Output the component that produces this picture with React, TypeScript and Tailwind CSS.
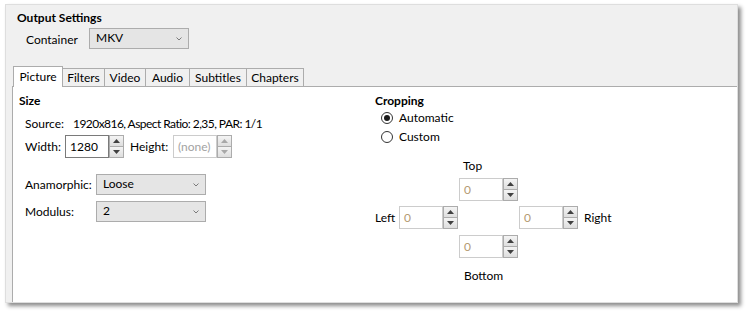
import React from 'react';

const font = { fontFamily: 'Lato, "Noto Sans", sans-serif' };

function Chevron() {
  return (
    <svg width="6" height="4" viewBox="0 0 6 4" className="shrink-0">
      <polyline points="0.5,0.5 3,3 5.5,0.5" fill="none" stroke="#7a7a7a" strokeWidth="1" />
    </svg>
  );
}

function Select({ value, width }: { value: string; width: string }) {
  return (
    <div className={`${width} h-[21px] flex items-center justify-between pl-[6px] pr-[6px] bg-[#e5e5e5] border border-[#acacac] text-[12px] text-black`}>
      <span className="-mt-[2px]">{value}</span>
      <Chevron />
    </div>
  );
}

function Arrow({ up, disabled }: { up?: boolean; disabled?: boolean }) {
  return (
    <div className="flex-1 flex items-center justify-center border border-[#acacac] bg-gradient-to-b from-[#f4f4f4] to-[#dedede]">
      <svg width="7" height="4" viewBox="0 0 7 4">
        <polygon
          points={up ? '0,4 3.5,0 7,4' : '0,0 3.5,4 7,0'}
          fill={disabled ? '#a8a8a8' : '#404040'}
        />
      </svg>
    </div>
  );
}

function Spin({ value, tone }: { value: string; tone: 'normal' | 'none' | 'zero' }) {
  const box =
    tone === 'normal'
      ? 'border-[#7a7a7a] text-black'
      : tone === 'none'
        ? 'border-[#cccccc] text-[#a3a3a3]'
        : 'border-[#cccccc] text-[#b49a72]';
  return (
    <div className="flex h-[23px]">
      <div className={`w-[44px] h-full border bg-white pl-[4px] flex items-center text-[12px] ${box}`}>
        <span className="mt-[1px]">{value}</span>
      </div>
      <div className="w-[15px] h-full flex flex-col -space-y-px">
        <Arrow up disabled={tone === 'none'} />
        <Arrow disabled={tone === 'none'} />
      </div>
    </div>
  );
}

function Radio({ checked, label }: { checked?: boolean; label: string }) {
  return (
    <div className="flex items-center h-[18px] leading-[18px] pl-[6px]">
      <svg width="12" height="12" viewBox="0 0 12 12" className="shrink-0">
        <circle cx="6" cy="6" r="5.5" fill="white" stroke="#333333" />
        {checked && <circle cx="6" cy="6" r="3" fill="#1a1a1a" />}
      </svg>
      <span className="ml-[6px]">{label}</span>
    </div>
  );
}

const tabs = [
  { name: 'Picture', w: 'w-[50px]' },
  { name: 'Filters', w: 'w-[43px]' },
  { name: 'Video', w: 'w-[42px]' },
  { name: 'Audio', w: 'w-[45px]' },
  { name: 'Subtitles', w: 'w-[58px]' },
  { name: 'Chapters', w: 'w-[58px]' },
];

export default function App() {
  return (
    <div className="w-[747px] h-[313px] bg-white overflow-hidden pt-[4px] pl-[5px] text-[12px] text-black" style={font}>
      <div className="w-[733px] h-[299px] bg-[#f0f0f0] border border-[#dedede] shadow-[3px_3px_4px_rgba(0,0,0,0.45)] overflow-hidden">
        <div className="mt-[5px] pl-[11px] h-[16px] leading-[16px] font-bold">Output Settings</div>

        <div className="mt-[2px] pl-[20px] flex items-center">
          <span className="w-[63px] mt-[2px]">Container</span>
          <Select value="MKV" width="w-[100px]" />
        </div>

        {/* tabs */}
        <div className="mt-[17px] ml-[7px] flex items-end h-[20px]">
          {tabs.map((t, i) =>
            i === 0 ? (
              <div
                key={t.name}
                className={`${t.w} h-[21px] -mb-px relative z-10 bg-white border border-b-0 border-[#acacac] flex items-center justify-center`}
              >
                {t.name}
              </div>
            ) : (
              <div
                key={t.name}
                className={`${t.w} h-[18px] -ml-px bg-[#f0f0f0] border border-b-0 border-[#acacac] flex items-center justify-center`}
              >
                {t.name}
              </div>
            )
          )}
        </div>

        {/* pane */}
        <div className="ml-[6px] w-[726px] h-[240px] bg-white border border-[#acacac] flex pl-[6px] pt-[6px]">
          <div className="w-[356px]">
            <div className="h-[16px] leading-[16px] font-bold">Size</div>
            <div className="mt-[7px] h-[16px] leading-[16px] pl-[6px] flex">
              <span className="w-[48px]">Source:</span>
              <span className="tracking-[-0.55px]">1920x816, Aspect Ratio: 2,35, PAR: 1/1</span>
            </div>
            <div className="mt-[3px] pl-[6px] flex items-center">
              <span className="w-[40px]">Width:</span>
              <Spin value="1280" tone="normal" />
              <span className="ml-[6px] w-[43px]">Height:</span>
              <Spin value="(none)" tone="none" />
            </div>
            <div className="mt-[16px] pl-[6px] flex items-center">
              <span className="w-[71px]">Anamorphic:</span>
              <Select value="Loose" width="w-[110px]" />
            </div>
            <div className="mt-[6px] pl-[6px] flex items-center">
              <span className="w-[71px]">Modulus:</span>
              <Select value="2" width="w-[110px]" />
            </div>
          </div>

          <div className="flex-1">
            <div className="h-[16px] leading-[16px] font-bold">Cropping</div>
            <div className="flex flex-col gap-[1px]">
              <Radio checked label="Automatic" />
              <Radio label="Custom" />
            </div>

            <div className="mt-[12px] ml-[88px] h-[16px] leading-[16px]">Top</div>
            <div className="mt-[4px] ml-[84px]">
              <Spin value="0" tone="zero" />
            </div>
            <div className="mt-[5px] flex items-center">
              <span className="w-[24px]">Left</span>
              <Spin value="0" tone="zero" />
              <div className="w-[61px]" />
              <Spin value="0" tone="zero" />
              <span className="ml-[6px]">Right</span>
            </div>
            <div className="mt-[6px] ml-[84px]">
              <Spin value="0" tone="zero" />
            </div>
            <div className="mt-[10px] ml-[89px] h-[16px] leading-[16px]">Bottom</div>
          </div>
        </div>
      </div>
    </div>
  );
}
